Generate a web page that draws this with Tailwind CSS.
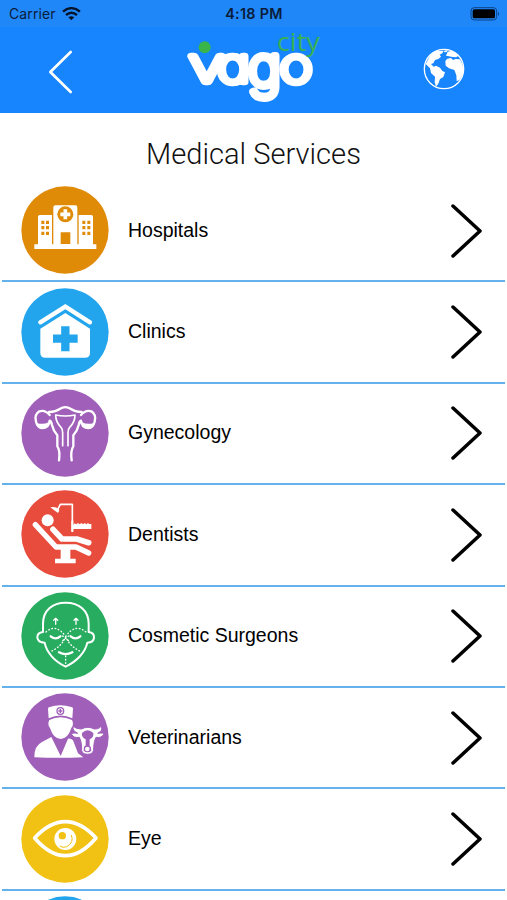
<!DOCTYPE html>
<html lang="en">
<head>
<meta charset="utf-8">
<title>Medical Services</title>
<script src="https://cdn.jsdelivr.net/npm/@tailwindcss/browser@4"></script>
</head>
<body class="w-[507px] h-[900px] overflow-hidden bg-white text-black font-['Liberation_Sans',Arial,sans-serif]">
<div class="h-[900px] overflow-hidden flex flex-col">
<header class="h-[113px] shrink-0 bg-[#1685fe] flex flex-col">
  <div class="h-[27px] shrink-0 bg-[#2087f9] grid grid-cols-3 items-center pl-[9px] pr-[6px] font-[Inter,sans-serif] text-[#0a1c38]">
    <div class="flex items-center gap-[6px] text-[14px] tracking-[0.1px]">
      <span>Carrier</span>
      <svg class="w-[19px] h-[14px]" viewBox="0 0 57 42" fill="none" stroke="#051327" stroke-width="7"><path d="M3 14Q28 -7 54 14M12 24Q28 10 45 24"/><path d="M19 31Q28 24 37 31L28 40Z" fill="#051327" stroke="none"/></svg>
    </div>
    <div class="text-center text-[14.3px] font-semibold tracking-[0.3px] -ml-[2px]">4:18 PM</div>
    <svg class="justify-self-end w-[31px] h-[14px]" viewBox="0 0 93 42"><rect x="3" y="2" width="77" height="37" rx="10" fill="none" stroke="#0b4387" stroke-width="3"/><rect x="8" y="7" width="67" height="27" rx="5" fill="#000"/><path d="M84 15q7 5 0 12z" fill="#0b4387"/></svg>
  </div>
  <div class="flex-1 flex items-start pl-[48px]">
    <svg class="w-[26px] h-[46px] mt-[22px]" viewBox="0 0 78 138" fill="none" stroke="#fff" stroke-width="8" stroke-linecap="round" stroke-linejoin="round"><path d="M68 9L7 69L68 129"/></svg>
    <svg class="w-[150px] h-[86px] ml-[106px] overflow-visible" viewBox="0 21 450 258">
      <g fill="#fff" stroke="#fff" stroke-width="20" stroke-linejoin="round" stroke-linecap="round" font-family="Inter, sans-serif" font-size="140" font-weight="100" style="font-feature-settings:'cv11'">
        <text x="26" y="185" textLength="108" lengthAdjust="spacingAndGlyphs">v</text>
        <text x="112" y="185" textLength="98" lengthAdjust="spacingAndGlyphs">a</text>
        <text transform="translate(205 199) scale(1 1.18)" textLength="98" lengthAdjust="spacingAndGlyphs">g</text>
        <text x="299" y="185" textLength="98" lengthAdjust="spacingAndGlyphs">o</text>
      </g>
      <circle cx="74" cy="82" r="18" fill="#39b54a"/>
      <text x="291" y="93" fill="#39b154" font-family="'Open Sans', sans-serif" font-weight="400" font-size="74" textLength="128" lengthAdjust="spacingAndGlyphs">city</text>
    </svg>
    <svg class="w-[42px] h-[42px] mt-[21px] ml-[93px]" viewBox="70 142 126 126">
      <circle cx="133" cy="205" r="59" fill="none" stroke="#fff" stroke-width="4"/>
      <path fill="#fff" d="M78 190L91 165L107 151L132 150L128 158L120 162L124 168L116 175L106 178L101 188L94 190L102 198L109 195L121 201L128 211L136 215L131 229L121 235L116 249L109 258L105 245L106 228L94 217L91 203Z M133 150L145 148L141 154L134 155Z M139 165L144 153L154 151L165 155L178 164L170 170L158 169L148 167Z M137 181L143 174L154 172L160 178L168 175L181 176L188 190L192 206L189 221L180 237L171 242L170 224L164 208L148 203L138 195Z M190 214L192 214L187 227L185 225Z"/>
    </svg>
  </div>
</header>
<main class="flex flex-col">
  <h1 class="h-[68px] pt-[23px] text-center text-[29.1px] leading-[36px] font-light font-[Roboto,sans-serif] text-[#111]">Medical Services</h1>
  <ul class="mx-[2px] flex flex-col [&>li]:h-[101.4px] [&>li]:shrink-0 [&>li]:flex [&>li]:items-center [&>li]:border-b-2 [&>li]:border-[#65b1ec] [&>li]:pl-[19px] [&>li]:pr-[23px] [&>li>span]:ml-[19px] [&>li>span]:flex-1 [&>li>span]:text-[19.5px] [&>li>span]:pb-px [&>li>svg:first-child]:-mt-px">
    <li>
      <svg class="size-[88px]" viewBox="33 18 264 264"><circle cx="165" cy="150" r="131" fill="#df8b08"/>
        <path fill="#fff" d="M73 193H84V110Q84 105 89 105H126V193H130V82Q130 76 136 76H196Q202 76 202 82V193H206V105H244Q249 105 249 110V193H259V207H73Z"/>
        <path fill="#df8b08" d="M152 157H181V192H152Z M94 122h9v10h-9z M108 122h9v10h-9z M94 138h9v10h-9z M108 138h9v10h-9z M94 155h9v10h-9z M108 155h9v10h-9z M217 122h9v10h-9z M232 122h9v10h-9z M217 138h9v10h-9z M232 138h9v10h-9z M217 155h9v10h-9z M232 155h9v10h-9z"/>
        <circle cx="166" cy="103" r="24" fill="#df8b08"/><path d="M166 88V118M151 103H181" stroke="#fff" stroke-width="11"/></svg>
      <span>Hospitals</span>
      <svg class="w-[32px] h-[56px]" viewBox="0 0 32 56"><use href="#chevron"/></svg>
    </li>
    <li>
      <svg class="size-[88px]" viewBox="33 18 264 264"><circle cx="165" cy="150" r="131" fill="#22a5ed"/>
        <path d="M91 121L166 74L240 121" fill="none" stroke="#fff" stroke-width="13" stroke-linecap="round" stroke-linejoin="miter"/>
        <path fill="#fff" d="M91 140L166 93L240 140V212Q240 227 225 227H106Q91 227 91 212Z"/>
        <path d="M166 133V208M129 170H203" stroke="#22a5ed" stroke-width="25"/></svg>
      <span>Clinics</span>
      <svg class="w-[32px] h-[56px]" viewBox="0 0 32 56"><use href="#chevron"/></svg>
    </li>
    <li>
      <svg class="size-[88px]" viewBox="33 18 264 264"><circle cx="165" cy="150" r="131" fill="#a05fb8"/>
        <g fill="none" stroke="#fff" stroke-width="7" stroke-linecap="round" stroke-linejoin="round">
          <path d="M119 96Q105 79 88 85Q72 95 78 116Q83 136 98 135Q117 135 119 113Q124 114 126 126Q130 144 142 157V190Q151 202 147 232"/>
          <path d="M213 96Q227 79 244 85Q260 95 254 116Q249 136 234 135Q215 135 213 113Q208 114 206 126Q202 144 190 157V190Q181 202 185 232"/>
          <path d="M117 87Q138 86 149 78Q166 67 183 78Q194 86 215 87"/>
          <path d="M137 96Q166 102 195 96Q195 117 179 133Q174 138 174 149V188M137 96Q137 117 153 133Q158 138 158 149V188" stroke-width="5"/>
        </g><path fill="#fff" d="M80 119Q98 127 117 117Q114 138 98 138Q82 136 80 119ZM252 119Q234 127 215 117Q218 138 234 138Q250 136 252 119Z"/></svg>
      <span>Gynecology</span>
      <svg class="w-[32px] h-[56px]" viewBox="0 0 32 56"><use href="#chevron"/></svg>
    </li>
    <li>
      <svg class="size-[88px]" viewBox="33 18 264 264"><circle cx="165" cy="150" r="131" fill="#e84c3d"/>
        <g fill="none" stroke="#fff" stroke-linecap="round" stroke-linejoin="round">
          <path d="M76 122L138 189H198L236 207" stroke-width="16"/>
          <path d="M129 136L156 165H200L236 176" stroke-width="17"/>
          <path d="M144 75L151 61H187V142" stroke-width="5"/>
        </g>
        <path fill="#fff" d="M121 70Q136 66 147 76Q149 80 144 87Z M152 195H181V224H197V238H135V224H152Z M190 123L194 118L199 121L204 117L209 121L214 117L219 121L224 117L229 121L234 117L239 121L244 119V135H190Z M184 110h6v33h-6z"/>
        <circle cx="113" cy="109" r="18" fill="#fff"/></svg>
      <span>Dentists</span>
      <svg class="w-[32px] h-[56px]" viewBox="0 0 32 56"><use href="#chevron"/></svg>
    </li>
    <li>
      <svg class="size-[88px]" viewBox="33 18 264 264"><circle cx="165" cy="150" r="131" fill="#28ad60"/>
        <g fill="none" stroke="#fff" stroke-width="6" stroke-linecap="round" stroke-linejoin="round">
          <path d="M99 138V113C99 73 127 50 167 50S236 73 236 113V138Q253 140 252 155Q251 170 232 170C226 199 201 226 167 242C134 226 109 199 104 170Q84 170 82 155Q81 140 99 138Z"/>
          <path d="M122 151Q137 163 151 151M182 151Q196 163 211 151M147 199Q167 210 187 199" stroke-width="7"/>
          <path d="M137 115V99M131 103L137 97L143 103M198 115V99M192 103L198 97L204 103" stroke-width="4"/>
          <path d="M108 138Q137 111 167 151Q196 111 228 138M167 151Q158 179 122 197M167 151Q176 179 213 197M167 210V239M158 150L176 164M176 150L158 164" stroke-width="4" stroke-dasharray="2 8"/>
        </g></svg>
      <span>Cosmetic Surgeons</span>
      <svg class="w-[32px] h-[56px]" viewBox="0 0 32 56"><use href="#chevron"/></svg>
    </li>
    <li>
      <svg class="size-[88px]" viewBox="33 18 264 264"><circle cx="165" cy="150" r="131" fill="#a05fb8"/>
        <path fill="#fff" d="M116 94L114 65Q114 61 119 60Q150 50 184 60Q189 61 189 65L187 94Q151 77 116 94Z M118 99Q151 82 186 99Q193 113 184 123Q174 155 152 156Q130 155 120 123Q111 113 118 99Z M73 211Q72 177 96 165L124 150L152 207L174 155Q182 153 189 160L204 199L220 211Q145 214 73 211Z"/>
        <circle cx="151" cy="72" r="10" fill="none" stroke="#a05fb8" stroke-width="4"/><path d="M151 66V78M145 72H157" stroke="#a05fb8" stroke-width="4"/>
        <path fill="#fff" stroke="#a05fb8" stroke-width="3" d="M190 118Q198 126 214 126Q234 116 253 126Q269 126 272 118Q282 130 263 139Q282 136 281 142Q274 154 258 151Q252 161 251 181Q253 202 233 202Q211 202 215 181Q214 161 208 151Q191 154 185 142Q187 136 203 139Q185 130 190 118Z"/>
        <path fill="#a05fb8" d="M216 138Q233 121 250 138Q252 151 239 157V180H227V157Q214 151 216 138ZM222 179Q232 169 242 179L244 191Q233 201 221 191Z"/><ellipse cx="232" cy="186" rx="7" ry="7" fill="#fff"/></svg>
      <span>Veterinarians</span>
      <svg class="w-[32px] h-[56px]" viewBox="0 0 32 56"><use href="#chevron"/></svg>
    </li>
    <li>
      <svg class="size-[88px]" viewBox="33 18 264 264"><circle cx="165" cy="150" r="131" fill="#f1c113"/>
        <path d="M74 147Q119 98 166 98T258 147Q213 200 166 200T74 147Z" fill="none" stroke="#fff" stroke-width="11" stroke-linejoin="round"/>
        <circle cx="166" cy="150" r="33" fill="#fff"/><circle cx="157" cy="140" r="11" fill="#f1c113"/><path d="M184 138Q193 161 170 173Q158 178 150 171" fill="none" stroke="#f1c113" stroke-width="3"/></svg>
      <span>Eye</span>
      <svg class="w-[32px] h-[56px]" viewBox="0 0 32 56"><g id="chevron"><path d="M3 3L30 28L3 53" fill="none" stroke="#000" stroke-width="3.5" stroke-linecap="round" stroke-linejoin="round"/></g></svg>
    </li>
    <li>
      <svg class="size-[88px]" viewBox="33 18 264 264"><circle cx="165" cy="150" r="131" fill="#22a5ed"/></svg>
    </li>
  </ul>
</main>
</div>
</body>
</html>
